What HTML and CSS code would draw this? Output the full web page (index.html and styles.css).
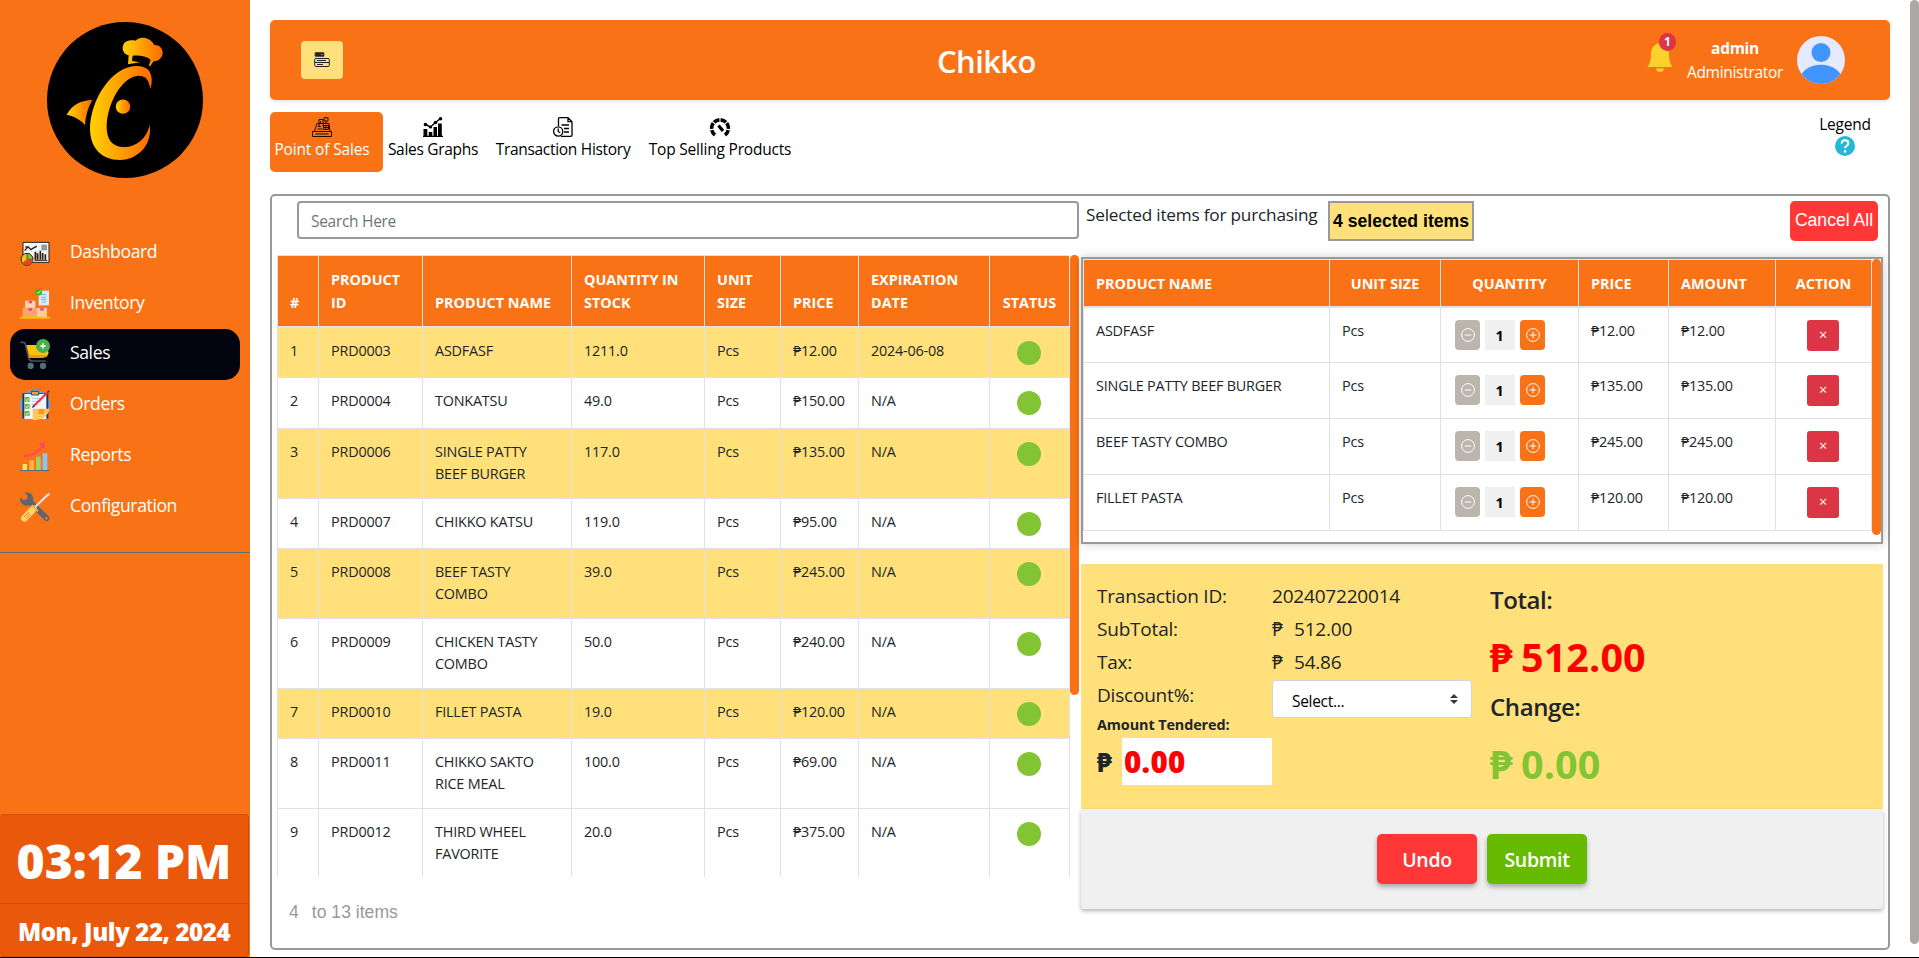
FILE: index.html
```html
<!DOCTYPE html>
<html lang="en">
<head>
<meta charset="utf-8">
<title>Chikko</title>
<link rel="stylesheet" href="styles.css">
</head>
<body>
<svg class="defs" width="0" height="0" aria-hidden="true">
  <symbol id="minus" viewBox="0 0 16 16"><circle cx="8" cy="8" r="6.4" fill="none" stroke="currentColor"/><path d="M4.6 8h6.8" stroke="currentColor"/></symbol>
  <symbol id="plus" viewBox="0 0 16 16"><circle cx="8" cy="8" r="6.4" fill="none" stroke="currentColor"/><path d="M4.6 8h6.8M8 4.6v6.8" stroke="currentColor"/></symbol>
</svg>
<aside class="sidebar">
  <svg class="logo" viewBox="141 66 468 468">
    <defs>
      <linearGradient id="g"><stop offset="0" stop-color="#ffd200"/><stop offset="1" stop-color="#ff6a00"/></linearGradient>
    </defs>
    <circle cx="375" cy="300" r="234" fill="#000"/>
    <path fill="url(#g)" d="M451 267Q461 235 448 213Q436 198 408 198C335 200 270 300 270 388C271 445 305 480 360 480C418 478 458 430 449 374C441 414 410 441 372 441C335 441 320 418 320 378C322 310 365 230 416 227C440 227 447 243 451 267Z"/>
    <path fill="url(#g)" d="M384 193L386 166C369 162 365 145 370 134C376 121 394 119 407 122C419 108 450 110 463 135C480 134 489 148 488 160C487 174 475 184 461 184L451 198H446L452 180C440 168 417 166 398 167L396 183L420 187Z"/>
    <path fill="url(#g)" d="M200 344Q222 302 277 300Q257 335 255 376Q235 350 200 344Z"/>
    <circle cx="369" cy="320" r="21.500" fill="url(#g)"/>
  </svg>
  <nav class="nav">
    <a class="nav-item">
      <svg viewBox="60 54 90 90"><path d="M69 67h78v60H69z" fill="#f4f4f4" stroke="#222" stroke-width="3"/><path d="M124 74h17v17h-17z" fill="#999"/><path d="M74 92l10-12 9 9 17-11M76 80l8 3M98 85l12-6" stroke="#222" stroke-width="4" fill="none"/><path d="M106 95v24M113 100v19M121 92v27M128 99v20M136 103v16" stroke="#222" stroke-width="5"/><path d="M104 121h38" stroke="#222" stroke-width="3"/><path d="M110 97v20" stroke="#c22" stroke-width="2"/><circle cx="81" cy="118" r="18" fill="#f5c518" stroke="#222" stroke-width="3"/><path d="M81 118V100a18 18 0 0 1 18 18z" fill="#7ac143" stroke="#222" stroke-width="2"/><path d="M81 118h18a18 18 0 0 1-32 11z" fill="#e8402a"/></svg>
      <span>Dashboard</span></a>
    <a class="nav-item">
      <svg viewBox="60 208 90 90"><path d="M116 213h31v44h-31z" fill="#dcebfb"/><path d="M123 225h15M123 233h15M123 240h15M126 247h12" stroke="#6faef0" stroke-width="3"/><circle cx="116" cy="217" r="10.500" fill="#46b414"/><path d="M111 217l4 4 7-8" stroke="#fff" stroke-width="2.500" fill="none"/><path d="M75 243h31v22H75z" fill="#fbd3ae"/><path d="M68 265h42v27H68z" fill="#f7a56e"/><path d="M110 265h31v27h-31z" fill="#fbcba0"/><path d="M86 243h10v8H86zM85 265h11v8H85zM121 265h10v8h-10z" fill="#ef4f6b"/><path d="M60 291h90v6H60z" fill="#ffc400"/></svg>
      <span>Inventory</span></a>
    <a class="nav-item active">
      <svg viewBox="60 360 90 90"><path d="M77 378h62l7 24q-2 9-10 10H86z" fill="#ffc107"/><path d="M61 370h10q4 0 5 5l10 42q2 9 10 9h41" stroke="#45525b" stroke-width="5" fill="none"/><path d="M85 407l2 10h42q12-1 16-8" fill="#e79b0c"/><circle cx="92" cy="441" r="9.500" fill="#546e7a"/><circle cx="129" cy="441" r="9.500" fill="#546e7a"/><circle cx="129" cy="381" r="21" fill="#4caf50"/><path d="M121 381h16M129 373v16" stroke="#fff" stroke-width="4"/></svg>
      <span>Sales</span></a>
    <a class="nav-item">
      <svg viewBox="60 510 90 90"><circle cx="105" cy="555" r="45" fill="#5ba7f7"/><path d="M67 520h78v76H67z" fill="#23395d"/><path d="M73 522h66v75H73z" fill="#f2f6fb"/><path d="M98 566h51q-6 31-42 34h-9z" fill="#fdc661"/><path d="M115 567h17v15h-17z" fill="#f59e0b"/><path d="M94 514h22v11H94z" fill="#e6a93c" stroke="#3a4a5f" stroke-width="3"/><path d="M95 535h35M95 544h30M95 553h15" stroke="#a9c9ee" stroke-width="3"/><path d="M74 531h15v14H74zM74 552h15v14H74zM74 573h15v14H74z" fill="#66b83d"/><path d="M77 538l4 4 6-7M77 559l4 4 6-7M77 580l4 4 6-7" stroke="#fff" stroke-width="2.500" fill="none"/><path d="M99 560L144 516" stroke="#ee3344" stroke-width="6"/><path d="M95 564l5-8 4 4z" fill="#23395d"/><path d="M143 517l5-5" stroke="#23395d" stroke-width="4"/></svg>
      <span>Orders</span></a>
    <a class="nav-item">
      <svg viewBox="60 662 90 90"><path d="M68 731h13v19H68z" fill="#fde36f"/><path d="M88 720h14v30H88z" fill="#fdb44b"/><path d="M108 709h14v41h-14z" fill="#9ad36a"/><path d="M128 699h14v51h-14z" fill="#8cc4f8"/><path d="M60 750.500h90" stroke="#53707f" stroke-width="3"/><path d="M73 707Q108 706 128 678" stroke="#ff4b55" stroke-width="7" fill="none"/><path d="M116 672l18-9 1 21z" fill="#ff4b55"/></svg>
      <span>Reports</span></a>
    <a class="nav-item">
      <svg viewBox="60 815 90 90"><path d="M79 833L140 894" stroke="#5d6472" stroke-width="17" stroke-linecap="round"/><circle cx="80" cy="836" r="20" fill="#5d6472"/><path d="M58 813l16 4 9 9-2 11-10 3-12-10z" fill="#f97316"/><circle cx="139" cy="894" r="4" fill="#f97316"/><path d="M103 862L143 823" stroke="#dfe5ec" stroke-width="6"/><path d="M139 824l8-6 3 4-7 7z" fill="#dfe5ec"/><path d="M73 894L100 866" stroke="#ffd469" stroke-width="20" stroke-linecap="round"/><path d="M95 855l19 18" stroke="#fbb03b" stroke-width="6"/><path d="M72 891l14-15M78 895l13-14" stroke="#f0733c" stroke-width="3"/></svg>
      <span>Configuration</span></a>
  </nav>
  <div class="clock">
    <div class="time"><span>03:12 PM</span></div>
    <div class="date"><span>Mon, July 22, 2024</span></div>
  </div>
</aside>

<main class="main">
  <header class="topbar">
    <button class="menu-btn"><svg viewBox="0 0 16 16" width="16" height="16" fill="none" stroke="#212529"><path d="M1.200.800h8.600v3.400H1.200z" fill="#212529" stroke-linejoin="round"/><rect x=".7" y="6.500" width="14.600" height="8" rx="1.200"/><path d="M.7 10.500h14.600M3 8.500h9M3 12.500h6"/><path d="M7 2.500h1.500" stroke="#b9923c"/></svg></button>
    <h1>Chikko</h1>
    <div class="user">
      <div class="bell">
        <svg viewBox="0 0 26 30" width="26" height="30"><path fill="#fbd12b" d="M13 1c-6 1-9 5-9 11 0 6-1 9-3.500 13h25C23 21 22 18 22 12c0-6-3-10-9-11zM9 26.500h8q-.5 3.500-4 3.500t-4-3.500z"/></svg>
        <span class="badge">1</span>
      </div>
      <div class="who"><strong>admin</strong><span>Administrator</span></div>
      <svg class="avatar" viewBox="0 0 48 48"><defs><clipPath id="av"><circle cx="24" cy="24" r="24"/></clipPath></defs><g clip-path="url(#av)"><path d="M0 0h48v48H0z" fill="#e4eaff"/><circle cx="24" cy="16.500" r="9.500" fill="#4294ff"/><ellipse cx="24" cy="46" rx="22" ry="17.200" fill="#4294ff"/></g></svg>
    </div>
  </header>

  <div class="tabs">
    <a class="tab active t1"><svg viewBox="0 0 20 20" fill="none" stroke="#1b0d02"><path d="M.5 14.500h19v5H.5zM3.500 17h13M2.500 14L5 6.500h12L18 14M7 9V2.500h4V9M8.500 7V4M12 4V.800h4V4zM14 4v3M6 9.500h3M5.500 12h5M11.500 8.500h5v4h-5zM14 8v5M12 10.500h5"/></svg><span>Point of Sales</span></a>
    <a class="tab t2"><svg viewBox="0 0 20 20" fill="#000"><path d="M.5 12h3.800v8H.5zM5.700 15h3.600v5H5.700zM10.500 10h3.500v10h-3.500zM15 6.500h3.800V20H15zM0 18.800h20V20H0z"/><path d="M2.500 7.500l5 2.500 5-4.500 5-4" stroke="#000" stroke-width="1.400" fill="none"/><circle cx="2.500" cy="7.500" r="1.800"/><circle cx="7.500" cy="10" r="1.600"/><circle cx="12.500" cy="5.500" r="1.800"/><circle cx="17.500" cy="1.800" r="1.800"/></svg><span>Sales Graphs</span></a>
    <a class="tab t3"><svg viewBox="0 0 20 20" fill="none" stroke="#000" stroke-width="1.300"><path d="M5.500 9V2q0-1.300 1.300-1.300H15l4 4V18q0 1.300-1.300 1.300H8M15 .700v4h4M8.500 8h7.500M11 11.500h5M11 15h5"/><circle cx="5.200" cy="14.500" r="4.600"/><path d="M5.200 11.500v3l2 1.200"/></svg><span>Transaction History</span></a>
    <a class="tab t4"><svg viewBox="0 0 20 20" fill="none" stroke="#000"><path d="M5 18A8.400 8.400 0 1 1 15 18" stroke-width="3.600" stroke-dasharray="5.300 1" pathLength="36.800"/><path d="M8.500 8.500l4.500 5.500" stroke-width="3.200"/></svg><span>Top Selling Products</span></a>
    <div class="legend"><span>Legend</span><svg viewBox="0 0 20 20" width="20" height="20"><circle cx="10" cy="10" r="10" fill="#25b7d3"/><path d="M6.600 7.600q.2-3.300 3.500-3.300 3.300.1 3.300 2.900 0 1.500-1.800 2.600-1.500.9-1.500 2.500" fill="none" stroke="#fff" stroke-width="2"/><circle cx="10.100" cy="15.400" r="1.300" fill="#fff"/></svg></div>
  </div>

  <section class="panel">
    <div class="left">
      <div class="search">Search Here</div>
      <div class="products">
        <table class="grid">
          <colgroup><col class="a1"><col class="a2"><col class="a3"><col class="a4"><col class="a5"><col class="a6"><col class="a7"><col class="a8"></colgroup>
          <thead><tr><th>#</th><th>PRODUCT<br>ID</th><th>PRODUCT NAME</th><th>QUANTITY IN<br>STOCK</th><th>UNIT<br>SIZE</th><th>PRICE</th><th>EXPIRATION<br>DATE</th><th class="mid">STATUS</th></tr></thead>
          <tbody>
            <tr><td>1</td><td>PRD0003</td><td>ASDFASF</td><td>1211.0</td><td>Pcs</td><td>₱12.00</td><td>2024-06-08</td><td><i class="dot"></i></td></tr>
            <tr class="mid-row"><td>2</td><td>PRD0004</td><td>TONKATSU</td><td>49.0</td><td>Pcs</td><td>₱150.00</td><td>N/A</td><td><i class="dot"></i></td></tr>
            <tr class="tall"><td>3</td><td>PRD0006</td><td>SINGLE PATTY<br>BEEF BURGER</td><td>117.0</td><td>Pcs</td><td>₱135.00</td><td>N/A</td><td><i class="dot"></i></td></tr>
            <tr><td>4</td><td>PRD0007</td><td>CHIKKO KATSU</td><td>119.0</td><td>Pcs</td><td>₱95.00</td><td>N/A</td><td><i class="dot"></i></td></tr>
            <tr class="tall"><td>5</td><td>PRD0008</td><td>BEEF TASTY<br>COMBO</td><td>39.0</td><td>Pcs</td><td>₱245.00</td><td>N/A</td><td><i class="dot"></i></td></tr>
            <tr class="tall"><td>6</td><td>PRD0009</td><td>CHICKEN TASTY<br>COMBO</td><td>50.0</td><td>Pcs</td><td>₱240.00</td><td>N/A</td><td><i class="dot"></i></td></tr>
            <tr><td>7</td><td>PRD0010</td><td>FILLET PASTA</td><td>19.0</td><td>Pcs</td><td>₱120.00</td><td>N/A</td><td><i class="dot"></i></td></tr>
            <tr class="tall"><td>8</td><td>PRD0011</td><td>CHIKKO SAKTO<br>RICE MEAL</td><td>100.0</td><td>Pcs</td><td>₱69.00</td><td>N/A</td><td><i class="dot"></i></td></tr>
            <tr class="tall"><td>9</td><td>PRD0012</td><td>THIRD WHEEL<br>FAVORITE</td><td>20.0</td><td>Pcs</td><td>₱375.00</td><td>N/A</td><td><i class="dot"></i></td></tr>
          </tbody>
        </table>
        <div class="bar"></div>
      </div>
      <div class="pager"><span>4</span><span>to 13 items</span></div>
    </div>

    <div class="right">
      <div class="cart-head"><span class="cart-title">Selected items for purchasing</span><span class="count">4 selected items</span><button class="cancel">Cancel All</button></div>
      <div class="cart">
        <table class="grid cart-grid">
          <colgroup><col class="b1"><col class="b2"><col class="b3"><col class="b4"><col class="b5"><col class="b6"></colgroup>
          <thead><tr><th>PRODUCT NAME</th><th class="mid">UNIT SIZE</th><th class="mid">QUANTITY</th><th>PRICE</th><th>AMOUNT</th><th class="mid">ACTION</th></tr></thead>
          <tbody>
            <tr><td>ASDFASF</td><td>Pcs</td><td><div class="qty"><button class="less"><svg><use href="#minus"/></svg></button><b>1</b><button class="more"><svg><use href="#plus"/></svg></button></div></td><td>₱12.00</td><td>₱12.00</td><td><button class="del">×</button></td></tr>
            <tr><td>SINGLE PATTY BEEF BURGER</td><td>Pcs</td><td><div class="qty"><button class="less"><svg><use href="#minus"/></svg></button><b>1</b><button class="more"><svg><use href="#plus"/></svg></button></div></td><td>₱135.00</td><td>₱135.00</td><td><button class="del">×</button></td></tr>
            <tr><td>BEEF TASTY COMBO</td><td>Pcs</td><td><div class="qty"><button class="less"><svg><use href="#minus"/></svg></button><b>1</b><button class="more"><svg><use href="#plus"/></svg></button></div></td><td>₱245.00</td><td>₱245.00</td><td><button class="del">×</button></td></tr>
            <tr><td>FILLET PASTA</td><td>Pcs</td><td><div class="qty"><button class="less"><svg><use href="#minus"/></svg></button><b>1</b><button class="more"><svg><use href="#plus"/></svg></button></div></td><td>₱120.00</td><td>₱120.00</td><td><button class="del">×</button></td></tr>
          </tbody>
        </table>
        <div class="bar"></div>
      </div>
      <div class="summary">
        <div class="details">
          <span>Transaction ID:</span><span>202407220014</span>
          <span>SubTotal:</span><span class="money"><i>₱</i>512.00</span>
          <span>Tax:</span><span class="money"><i>₱</i>54.86</span>
          <span>Discount%:</span>
          <div class="select">Select...<svg viewBox="0 0 8 10" width="8" height="10"><path fill="#343a40" d="M4 0l4 4H0zM4 10L0 6h8z"/></svg></div>
          <strong class="tender-label">Amount Tendered:</strong>
          <div class="tender"><b>₱</b><div class="amount">0.00</div></div>
        </div>
        <div class="totals">
          <h2>Total:</h2><div class="sum red"><i>₱</i>512.00</div>
          <h2>Change:</h2><div class="sum green"><i>₱</i>0.00</div>
        </div>
      </div>
      <div class="actions"><button class="undo">Undo</button><button class="submit">Submit</button></div>
    </div>
  </section>
</main>
<div class="page-scroll"><div class="thumb"></div></div>
</body>
</html>
```
FILE: styles.css
```css
* { box-sizing: border-box; }
body {
  margin: 0;
  height: 958px;
  display: flex;
  overflow: hidden;
  border-bottom: 1px solid #000;
  background: #fff;
  color: #212529;
  font-family: "Open Sans", "Noto Sans", sans-serif;
  font-size: 16px;
}
button { border: 0; padding: 0; font: inherit; color: #fff; display: flex; align-items: center; justify-content: center; }
i { font-style: normal; }
.defs { position: absolute; }

/* Sidebar */
.sidebar { width: 250px; background: #f97316; display: flex; flex-direction: column; }
.logo { width: 156px; height: 156px; margin: 22px 0 0 47px; }
.nav { height: 325.500px; margin-top: 49.500px; padding: 0 10px; border-bottom: 1px solid #5d6b70; }
.nav-item { height: 50.750px; display: flex; align-items: center; padding-left: 10px; border-radius: 15px; color: #fff; font-size: 17.600px; letter-spacing: -.4px; }
.nav-item svg { width: 30px; height: 30px; margin-right: 20px; }
.nav-item span { margin-top: -4px; }
.nav-item.active { background: #020410; }
.clock { width: 249px; height: 143px; margin-top: auto; background: #ea580c; border: 1px solid #cd4d0b; border-left: 0; border-radius: 4px; color: #fff; font-weight: 800; text-align: center; white-space: nowrap; }
.time { height: 89px; line-height: 92px; font-size: 48px; letter-spacing: -.1px; border-bottom: 1px solid #cd4d0b; }
.date { line-height: 55px; font-size: 24px; letter-spacing: -.4px; }

/* Header */
.main { width: 1620px; margin: 0 20px; }
.topbar { height: 80px; margin-top: 20px; padding: 0 45px 0 31px; display: flex; align-items: center; background: #f97316; border-radius: 5px; box-shadow: 0 2px 4px rgba(0,0,0,.1); color: #fff; }
.menu-btn { width: 42px; height: 38px; background: #ffe07a; border-radius: 4px; }
.topbar h1 { margin: 1px 0 0 594px; width: 110px; font-size: 31px; font-weight: 600; line-height: 40px; letter-spacing: -.6px; }
.user { margin-left: auto; display: flex; align-items: center; }
.bell { position: relative; height: 30px; margin: -6px 13px 0 0; }
.badge { position: absolute; left: 12px; top: -9px; width: 17px; height: 18px; border-radius: 9px; background: #dc3545; font-size: 12px; font-weight: 700; line-height: 18px; text-align: center; }
.who { display: flex; flex-direction: column; align-items: center; width: 98px; margin-right: 13px; line-height: 25px; font-size: 15.500px; letter-spacing: -.3px; }
.who strong { font-weight: 700; position: relative; top: 1px; }
.avatar { width: 48px; height: 48px; }

/* Tabs */
.tabs { height: 60px; margin-top: 12px; display: flex; }
.tab { display: flex; flex-direction: column; align-items: center; padding-top: 5px; color: #000; font-size: 15.500px; letter-spacing: -.3px; line-height: 24px; white-space: nowrap; border-radius: 5px; }
.tab svg { width: 20px; height: 20px; }
.t1 { width: 113px; padding-right: 9px; color: #fff; background: #f97316; letter-spacing: -.15px; }
.t2 { width: 100px; }
.t3 { width: 160px; }
.t4 { width: 154px; letter-spacing: -.2px; }
.legend { margin-left: auto; width: 90px; padding-top: 0; display: flex; flex-direction: column; align-items: center; line-height: 24px; color: #000; font-size: 15.500px; letter-spacing: -.2px; }

/* Panel */
.panel { height: 756px; margin-top: 22px; border: 2px solid #999; border-radius: 5px; display: flex; }
.left { width: 809px; padding-left: 5px; }
.search { width: 782px; height: 38px; margin: 5px 0 0 20px; padding-left: 12px; border: 2px solid #999; border-radius: 4px; line-height: 37px; font-size: 15.500px; letter-spacing: -.3px; color: #6c757d; }
.products { height: 622px; margin-top: 16px; display: flex; overflow: hidden; width: 802px; }
.bar { width: 10px; height: 440px; border-radius: 5px; background: #f97316; }
.grid { width: 792px; flex: none; border-collapse: collapse; table-layout: fixed; font-size: 14.400px; letter-spacing: -.2px; line-height: 22.400px; align-self: flex-start; }
.grid th, .grid td { border: 1px solid #dee2e6; padding: 12px 0 0 12px; text-align: left; vertical-align: top; white-space: nowrap; }
.grid th { height: 71px; background: #f97316; color: #fff; font-weight: 700; font-size: 14.400px; letter-spacing: 0; vertical-align: bottom; padding-bottom: 12px; line-height: 23px; border-bottom-width: 2px; }
.grid th.mid { text-align: center; padding-left: 0; }
.grid td { height: 50px; }
.grid .mid-row td { height: 51px; }
.grid .tall td { height: 70px; }
.grid tbody tr:nth-child(odd) { background: #ffe07a; }
.grid tbody tr:nth-child(9) { background: #fff; }
.dot { display: block; width: 24px; height: 24px; border-radius: 50%; background: #82c434; margin: 1px 0 0 15px; }
.a1 { width: 41px; } .a2 { width: 104px; } .a3 { width: 149px; } .a4 { width: 133px; }
.a5 { width: 76px; } .a6 { width: 78px; } .a7 { width: 131px; } .a8 { width: 80px; }
.pager { display: flex; gap: 13px; padding-left: 12px; margin-top: 24px; font: 17.600px/22px "Liberation Sans", sans-serif; color: #999; }

/* Cart */
.right { width: 802px; }
.cart-head { height: 40px; margin-top: 5px; padding: 0 5px; display: flex; }
.cart-title { width: 242px; font-size: 17.200px; line-height: 27px; letter-spacing: -.2px; white-space: nowrap; }
.count { width: 146px; border: 2px solid #999; background: #ffe07a; color: #000; font: bold 17.600px/36px "Liberation Sans", sans-serif; text-align: center; }
.cancel { width: 88px; margin-left: auto; background: #ff3737; border-radius: 5px; font: 17.600px "Liberation Sans", sans-serif; padding-bottom: 2px; }
.cart { height: 287px; margin-top: 16px; display: flex; border: 2px solid #999; box-shadow: 0 0 10px rgba(0,0,0,.2); overflow: hidden; }
.cart .bar { height: 276px; }
.cart-grid { width: 788px; }
.cart-grid th { height: 47px; padding-bottom: 11px; padding-top: 0; }
.cart-grid td { height: 56px; }
.cart-grid tbody tr:nth-child(odd) { background: #fff; }
.b1 { width: 246px; } .b2 { width: 111px; } .b3 { width: 138px; } .b4 { width: 90px; } .b5 { width: 107px; } .b6 { width: 96px; }
.qty { display: flex; gap: 5px; padding-left: 2px; }
.qty button { width: 25px; height: 30px; border-radius: 4px; }
.qty svg { width: 16px; height: 16px; }
.qty b { width: 30px; height: 30px; background: #f0f0f0; color: #000; line-height: 32px; text-align: center; font-weight: 700; padding-right: 1px; }
.less { background: #bcb5ae; }
.more { background: #f97316; }
.del { width: 32px; height: 31px; margin-left: 19px; background: #dc3545; border-radius: 3px; }

/* Summary */
.summary { height: 245px; margin-top: 20px; padding: 16px 0 0 16px; background: #ffe07a; display: flex; }
.details { width: 393px; display: grid; grid-template-columns: 175px 200px; grid-template-rows: 33px 33px 33px 39px 17px 1fr; line-height: 33px; font-size: 19px; letter-spacing: -.2px; align-content: start; }
.money i { display: inline-block; width: 22px; }
.select { height: 38px; margin-top: 1px; padding: 0 13px 0 19px; background: #fff; border: 1px solid #ced4da; border-radius: 4px; color: #000; font-size: 15.500px; letter-spacing: -.3px; display: flex; justify-content: space-between; line-height: 41px; }
.select svg { margin-top: 13px; }
.tender-label { grid-column: 1 / 3; font-size: 14.400px; line-height: 14px; letter-spacing: -.1px; }
.tender { display: flex; width: 175px; height: 47px; margin-top: 3px; line-height: 48px; }
.tender b { width: 25px; font-size: 26px; font-weight: 800; }
.amount { flex: 1; padding-left: 2px; background: #fff; color: #f00; font-size: 29.500px; font-weight: 800; letter-spacing: .3px; }
.totals h2 { margin: 0; font-size: 24px; font-weight: 600; line-height: 40px; letter-spacing: -.4px; }
.sum { height: 67px; line-height: 74px; font-size: 39.500px; font-weight: 700; letter-spacing: .1px; }
.sum i { display: inline-block; width: 31px; }
.red { color: #f00; }
.green { color: #82c434; }
.actions { height: 100px; display: flex; gap: 10px; justify-content: center; align-items: center; background: #f0f0f0; border-radius: 3px; box-shadow: 0 2px 4px rgba(0,0,0,.3); }
.actions button { width: 100px; height: 50px; border-radius: 5px; font-size: 19.500px; font-weight: 600; letter-spacing: -.3px; box-shadow: 0 3px 5px rgba(0,0,0,.3); }
.actions .undo { background: #ff3737; }
.actions .submit { background: #66bb00; }

.page-scroll { width: 9px; height: 957px; }
.thumb { height: 944px; background: #aca8a4; border-radius: 5px; }
```
